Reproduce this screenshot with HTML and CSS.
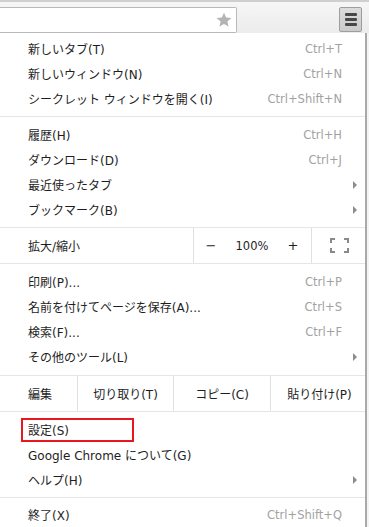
FILE: index.html
```
<!DOCTYPE html>
<html lang="ja">
<head>
    <meta charset="UTF-8">
    <meta name="viewport" content="width=device-width, initial-scale=1.0">
    <title>Chrome メニュー</title>
    <link rel="stylesheet" href="styles.css">
</head>
<body>
    <div class="toolbar">
        <div class="omnibox">
            <svg class="star" width="16" height="16" viewBox="0 0 16 16">
                <path d="M8 0.8 L10.1 5.6 L15.3 6 L11.4 9.4 L12.6 14.6 L8 11.9 L3.4 14.6 L4.6 9.4 L0.7 6 L5.9 5.6 Z" fill="#b4b4b4"/>
            </svg>
        </div>
        <div class="toolbar-space"></div>
        <div class="menu-btn">
            <span></span><span></span><span></span>
        </div>
    </div>

    <div class="menu">
        <div class="group first">
            <div class="item"><span class="label">新しいタブ(T)</span><span class="key">Ctrl+T</span><span class="sub"></span></div>
            <div class="item"><span class="label">新しいウィンドウ(N)</span><span class="key">Ctrl+N</span><span class="sub"></span></div>
            <div class="item"><span class="label">シークレット ウィンドウを開く(I)</span><span class="key">Ctrl+Shift+N</span><span class="sub"></span></div>
        </div>
        <div class="sep"></div>
        <div class="group">
            <div class="item"><span class="label">履歴(H)</span><span class="key">Ctrl+H</span><span class="sub"></span></div>
            <div class="item"><span class="label">ダウンロード(D)</span><span class="key">Ctrl+J</span><span class="sub"></span></div>
            <div class="item"><span class="label">最近使ったタブ</span><span class="key"></span><span class="sub arrow"></span></div>
            <div class="item"><span class="label">ブックマーク(B)</span><span class="key"></span><span class="sub arrow"></span></div>
        </div>
        <div class="sep"></div>
        <div class="button-row">
            <div class="row-label">拡大/縮小</div>
            <div class="zoom-cell">
                <span class="zoom-btn">−</span>
                <span class="zoom-value">100%</span>
                <span class="zoom-btn">+</span>
            </div>
            <div class="fs-cell">
                <svg width="19" height="15" viewBox="0 0 19 15">
                    <path d="M1 5 V1 H5 M14 1 H18 V5 M18 10 V14 H14 M5 14 H1 V10" fill="none" stroke="#8a8a8a" stroke-width="2"/>
                </svg>
            </div>
        </div>
        <div class="sep"></div>
        <div class="group tools">
            <div class="item"><span class="label">印刷(P)...</span><span class="key">Ctrl+P</span><span class="sub"></span></div>
            <div class="item"><span class="label">名前を付けてページを保存(A)...</span><span class="key">Ctrl+S</span><span class="sub"></span></div>
            <div class="item"><span class="label">検索(F)...</span><span class="key">Ctrl+F</span><span class="sub"></span></div>
            <div class="item"><span class="label">その他のツール(L)</span><span class="key"></span><span class="sub arrow"></span></div>
        </div>
        <div class="sep"></div>
        <div class="button-row">
            <div class="row-label">編集</div>
            <div class="edit-cell cut">切り取り(T)</div>
            <div class="edit-cell copy">コピー(C)</div>
            <div class="edit-cell paste">貼り付け(P)</div>
        </div>
        <div class="sep"></div>
        <div class="group">
            <div class="item marked"><span class="label">設定(S)</span><span class="key"></span><span class="sub"></span><div class="mark"></div></div>
            <div class="item"><span class="label">Google Chrome について(G)</span><span class="key"></span><span class="sub"></span></div>
            <div class="item"><span class="label">ヘルプ(H)</span><span class="key"></span><span class="sub arrow"></span></div>
        </div>
        <div class="sep"></div>
        <div class="group last">
            <div class="item"><span class="label">終了(X)</span><span class="key">Ctrl+Shift+Q</span><span class="sub"></span></div>
        </div>
    </div>
</body>
</html>
```

FILE: styles.css
```
* {
    box-sizing: border-box;
}

body {
    margin: 0;
    padding: 0;
    width: 369px;
    height: 527px;
    overflow: hidden;
    background-color: #f4f4f4;
    font-family: "DejaVu Sans", "Noto Sans CJK JP", sans-serif;
    font-size: 11.5px;
    color: #1e1e1e;
}

/* browser toolbar */
.toolbar {
    display: flex;
    align-items: flex-start;
    height: 33px;
    border-top: 2px solid #cfcfcf;
    background: linear-gradient(#f6f6f6, #ececec);
}

.omnibox {
    width: 237px;
    height: 26px;
    margin-top: 5px;
    background-color: #fff;
    border: 1px solid #b9b9b9;
    border-left: none;
    border-radius: 0 2px 2px 0;
    display: flex;
    align-items: center;
    justify-content: flex-end;
    padding-right: 4px;
}

.toolbar-space {
    flex-grow: 1;
}

.menu-btn {
    width: 23px;
    height: 25px;
    margin-top: 5px;
    margin-right: 7px;
    background: linear-gradient(#dcdcdc, #cacaca);
    border: 1px solid #9d9d9d;
    border-radius: 2px;
    display: flex;
    flex-direction: column;
    align-items: center;
    justify-content: center;
    gap: 2px;
}

.menu-btn span {
    display: block;
    width: 12px;
    height: 3px;
    border-radius: 1px;
    background-color: #474747;
}

/* menu panel */
.menu {
    width: 367px;
    height: 494px;
    background-color: #fff;
    border-right: 2px solid #a9a9a9;
}

.group {
    padding: 5px 0;
}

.group.first {
    padding-top: 3px;
}

.group.tools {
    padding-bottom: 6px;
}

.group.last {
    padding-top: 4px;
    padding-bottom: 0;
}

.sep {
    height: 1px;
    background-color: #e6e6e6;
}

.item {
    position: relative;
    display: flex;
    align-items: center;
    height: 25px;
    padding-left: 28px;
}

.label {
    flex-grow: 1;
    white-space: nowrap;
}

.label:lang(ja) {
    font-size: 12px;
}

.key {
    color: #a2a2a2;
    white-space: nowrap;
}

.sub {
    width: 23px;
    height: 25px;
    flex-shrink: 0;
}

.arrow {
    display: flex;
    align-items: center;
    padding-left: 11px;
}

.arrow::before {
    content: "";
    border-left: 4px solid #8c8c8c;
    border-top: 4px solid transparent;
    border-bottom: 4px solid transparent;
}

/* annotation box round the settings item */
.mark {
    position: absolute;
    left: 21px;
    top: 1px;
    width: 113px;
    height: 24px;
    border: 2px solid #e8161e;
}

/* zoom and edit rows */
.button-row {
    display: flex;
    height: 35px;
}

.row-label {
    flex-grow: 1;
    display: flex;
    align-items: center;
    padding-left: 28px;
    font-size: 12px;
}

.zoom-cell {
    width: 118px;
    border-left: 1px solid #e0e0e0;
    display: flex;
    align-items: center;
    padding-left: 11px;
}

.zoom-btn {
    width: 12px;
    text-align: center;
    font-size: 13px;
}

.zoom-value {
    width: 70px;
    text-align: center;
}

.fs-cell {
    width: 54px;
    border-left: 1px solid #e0e0e0;
    display: flex;
    align-items: center;
    justify-content: center;
    padding-left: 2px;
}

.edit-cell {
    display: flex;
    align-items: center;
    justify-content: center;
    border-left: 1px solid #e0e0e0;
    font-size: 12px;
}

.edit-cell.cut {
    width: 96px;
}

.edit-cell.copy {
    width: 97px;
}

.edit-cell.paste {
    width: 95px;
    padding-left: 3px;
}
```
